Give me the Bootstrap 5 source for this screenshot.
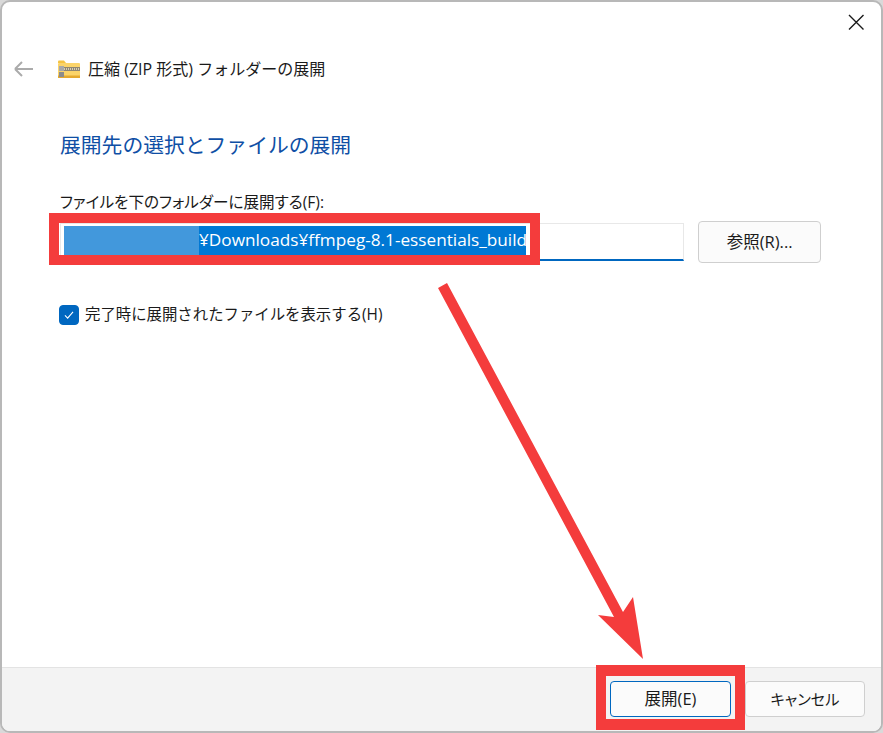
<!DOCTYPE html>
<html lang="ja">
<head>
<meta charset="utf-8">
<title>圧縮 (ZIP 形式) フォルダーの展開</title>
<link href="https://cdn.jsdelivr.net/npm/bootstrap@5.3.0/dist/css/bootstrap.min.css" rel="stylesheet">
<style>
html,body{margin:0;width:883px;height:733px;overflow:hidden;background:#d9d9d9}
body{font-family:"Open Sans","Noto Sans CJK JP",sans-serif;font-size:16px;color:#1a1a1a;position:relative}
.dlg{width:883px;height:733px;background:#fff;border:2px solid #b8b8b8;border-radius:10px;overflow:hidden}
.dlg-top{height:29px;padding:11px 16px 0 0}
.dlg-x{width:18px;height:18px;display:block}
.dlg-head{height:76px;padding:0 0 0 12px;line-height:24px}
.dlg-zip{margin-left:24px;margin-right:8px}
.dlg-main{padding:2px 60px 0 58px}
.dlg-h1{font-size:20.8px;font-weight:400;color:#0f4fa5;margin:0;line-height:30px;padding-top:21px;box-sizing:content-box;height:31px}
.dlg-lbl{line-height:24px;margin:29px 0 9px;height:24px;font-size:15.6px;font-feature-settings:"palt"}
.dlg-path{width:625px;height:38px;border:1px solid #e8e8e8;border-bottom:2px solid #0067c0;border-radius:0;padding:2px 4px 2px 3px;line-height:28px;white-space:nowrap;background:#fff;display:flex;font-size:17.2px}
.dlg-mask{display:inline-block;width:135px;height:29px;background:#4298dc}
.dlg-sel{display:inline-block;width:327px;height:29px;background:#0078d4;color:#fff;text-align:right;padding-right:1px}
.dlg-btn{border:1px solid #cfcfcf;border-radius:4px;background:#fbfbfb;color:#1a1a1a;font-size:16.500px;padding:0;line-height:1.2}
.dlg-btn:hover{background:#fbfbfb;border-color:#cfcfcf;color:#1a1a1a}
.dlg-browse{width:123px;height:42px;margin-left:14px;margin-top:-2px}
.dlg-chk{margin-top:40px;margin-left:-1px;display:flex;align-items:center;padding:0;min-height:0;font-size:15.400px}
.dlg-chk .form-check-input{width:20px;height:20px;margin:0 6px 0 0;float:none;border-radius:4px;background-color:#0067c0;border-color:#0067c0;opacity:1;background-image:url("data:image/svg+xml,%3csvg xmlns='http://www.w3.org/2000/svg' viewBox='0 0 20 20'%3e%3cpath fill='none' stroke='%23fff' stroke-width='1.2' d='M5.5 10.5l3 3 6-7'/%3e%3c/svg%3e")}
.dlg-foot{position:absolute;left:0;right:0;bottom:0;height:64px;background:#f3f3f3;border-top:1px solid #e3e3e3;padding:13px 16px 0 0}
.dlg-ok,.dlg-cancel{height:36px;width:121px}
.dlg-ok{border:1.5px solid #0067c0;margin-right:14px}
.dlg-cancel{width:120px;font-feature-settings:"palt";font-size:15.200px}
.dlg-mark{position:absolute;border:10px solid #f43c3c;pointer-events:none}
.dlg-mark1{left:49px;top:213px;width:491px;height:52px}
.dlg-mark2{left:596px;top:665px;width:149px;height:65px;border-width:11px 10px}
.dlg-arrow{position:absolute;left:0;top:0;pointer-events:none}
</style>
</head>
<body>
<div class="dlg position-relative">
  <div class="dlg-top d-flex justify-content-end">
    <svg class="dlg-x" viewBox="0 0 18 18"><path d="M2 2l14.5 14.5M16.5 2L2 16.5" stroke="#1a1a1a" stroke-width="1.4" fill="none"/></svg>
  </div>
  <div class="dlg-head d-flex align-items-center">
    <svg width="20" height="16" viewBox="0 0 20 16"><path d="M1 8h18M1 8l7-7M1 8l7 7" stroke="#ababab" stroke-width="2" fill="none"/></svg>
    <svg class="dlg-zip" width="22" height="18" viewBox="0 0 22 18">
      <path d="M0 1.5q0-1 1-1h5l2 2.500h-8z" fill="#f5c342"/>
      <rect x="0" y="3" width="22" height="15" rx="1" fill="#fbd46a"/>
      <rect x="0" y="15.500" width="22" height="2.500" fill="#e5a92f"/>
      <rect x="6" y="7" width="16" height="4" fill="#8f8672"/>
      <path d="M6 9h16" stroke="#eee5c8" stroke-width="1.300" stroke-dasharray="1 1"/>
      <rect x="1" y="6" width="5" height="5" fill="#a8a8a8"/>
      <rect x="1" y="12" width="5" height="5" fill="#8c8c8c"/>
    </svg>
    <span>圧縮 (ZIP 形式) フォルダーの展開</span>
  </div>
  <div class="dlg-main">
    <h1 class="dlg-h1">展開先の選択とファイルの展開</h1>
    <div class="dlg-lbl">ファイルを下のフォルダーに展開する(F):</div>
    <div class="d-flex align-items-start">
      <div class="dlg-path"><span class="dlg-mask"></span><span class="dlg-sel">¥Downloads¥ffmpeg-8.1-essentials_build</span></div>
      <button type="button" class="btn dlg-btn dlg-browse">参照(R)...</button>
    </div>
    <div class="form-check dlg-chk">
      <input class="form-check-input" type="checkbox" checked id="dlgShow">
      <label class="form-check-label" for="dlgShow">完了時に展開されたファイルを表示する(H)</label>
    </div>
  </div>
  <div class="dlg-foot d-flex justify-content-end">
    <button type="button" class="btn dlg-btn dlg-ok">展開(E)</button>
    <button type="button" class="btn dlg-btn dlg-cancel">キャンセル</button>
  </div>
</div>
<div class="dlg-mark dlg-mark1"></div>
<div class="dlg-mark dlg-mark2"></div>
<svg class="dlg-arrow" width="883" height="733" viewBox="0 0 883 733">
  <path d="M438 288L447 283L623 612L633 597L643 659L598 615L614 617Z" fill="#f43c3c"/>
</svg>
</body>
</html>
